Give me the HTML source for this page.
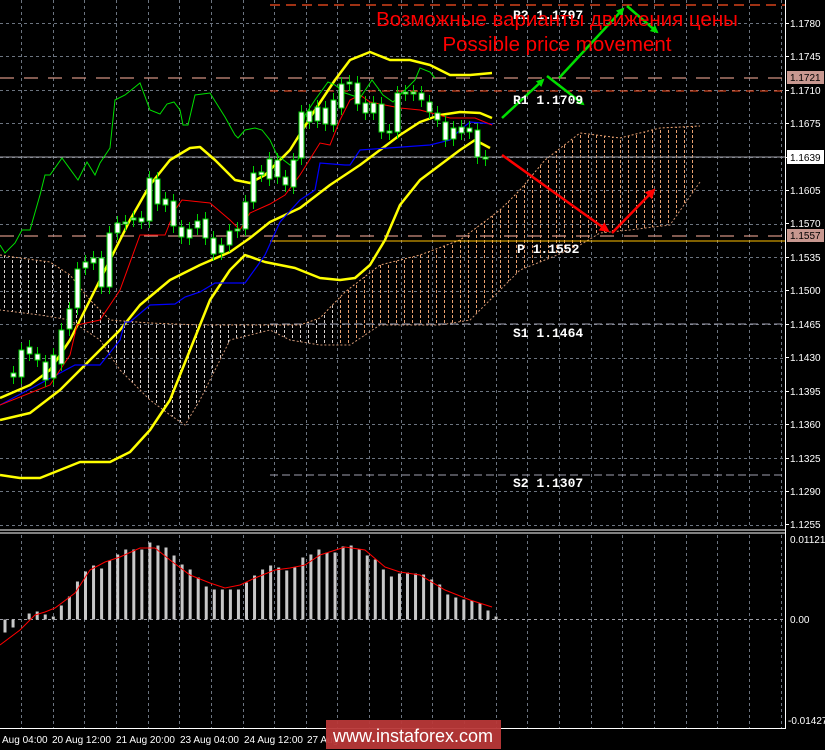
<!DOCTYPE html>
<html><head><meta charset="utf-8"><style>
html,body{margin:0;padding:0;background:#000;width:825px;height:750px;overflow:hidden}
svg{display:block}
.ax{font:10px "Liberation Sans",sans-serif;fill:#fff}
.lv{font:bold 13px "Liberation Mono",monospace;fill:#fff}
.rt{font:20.5px "Liberation Sans","Noto Sans CJK SC",sans-serif;fill:#ff0000}
.bt{font:10px "Liberation Sans",sans-serif;fill:#fff}
</style></head><body>
<svg id="s" width="825" height="750" xmlns="http://www.w3.org/2000/svg">
<defs>
<pattern id="hw" x="0" y="0" width="8" height="5" patternUnits="userSpaceOnUse"><rect x="4" y="0" width="1" height="3" fill="#d8d0cc"/></pattern>
<pattern id="ho" x="0" y="0" width="8" height="5" patternUnits="userSpaceOnUse"><rect x="4" y="0" width="1" height="3" fill="#e8a070"/></pattern>
<clipPath id="cl"><rect x="0" y="0" width="335" height="530"/></clipPath>
<clipPath id="cr"><rect x="335" y="0" width="450" height="530"/></clipPath>
<marker id="ag" markerWidth="8" markerHeight="8" refX="6" refY="4" orient="auto" markerUnits="userSpaceOnUse"><path d="M0,0 L8,4 L0,8 z" fill="#00e000"/></marker>
<marker id="ar" markerWidth="10" markerHeight="10" refX="8" refY="5" orient="auto" markerUnits="userSpaceOnUse"><path d="M0,0 L10,5 L0,10 z" fill="#ff0000"/></marker>
</defs>
<g id="grid"></g>
<g>
<polygon points="0,255 20,258 50,262 70,275 90,300 110,320 150,323 200,325 260,325 300,325 320,318 345,292 380,265 420,255 460,240 500,210 520,190 545,160 580,133 620,138 660,128 700,126 700,182 670,225 630,230 600,233 580,245 550,258 520,270 500,290 470,320 440,325 380,325 350,345 320,345 290,340 270,330 230,340 200,400 185,425 170,415 150,400 120,370 100,340 70,320 40,315 0,310" fill="url(#hw)" clip-path="url(#cl)"/>
<polygon points="0,255 20,258 50,262 70,275 90,300 110,320 150,323 200,325 260,325 300,325 320,318 345,292 380,265 420,255 460,240 500,210 520,190 545,160 580,133 620,138 660,128 700,126 700,182 670,225 630,230 600,233 580,245 550,258 520,270 500,290 470,320 440,325 380,325 350,345 320,345 290,340 270,330 230,340 200,400 185,425 170,415 150,400 120,370 100,340 70,320 40,315 0,310" fill="url(#ho)" clip-path="url(#cr)"/>
<polyline points="0,255 20,258 50,262 70,275 90,300 110,320 150,323 200,325 260,325 300,325 320,318 345,292 380,265 420,255 460,240 500,210 520,190 545,160 580,133 620,138 660,128 700,126" fill="none" stroke="#e8a070" stroke-width="1" stroke-dasharray="2,2"/>
<polyline points="700,182 670,225 630,230 600,233 580,245 550,258 520,270 500,290 470,320 440,325 380,325 350,345 320,345 290,340 270,330 230,340 200,400 185,425 170,415 150,400 120,370 100,340 70,320 40,315 0,310" fill="none" stroke="#c89070" stroke-width="1" stroke-dasharray="2,2"/>
</g>
<line x1="270" y1="5" x2="785" y2="5" stroke="#ff5020" stroke-dasharray="10,6" stroke-width="1.3"/>
<line x1="0" y1="78" x2="785" y2="78" stroke="#d09080" stroke-dasharray="14,10" stroke-width="1.2"/>
<line x1="270" y1="91" x2="785" y2="91" stroke="#ff5020" stroke-dasharray="8,6" stroke-width="1"/>
<line x1="0" y1="157" x2="785" y2="157" stroke="#a0a0a8" stroke-width="1"/>
<line x1="0" y1="236" x2="785" y2="236" stroke="#d09080" stroke-dasharray="14,10" stroke-width="1.2"/>
<line x1="270" y1="241" x2="785" y2="241" stroke="#ffc000" stroke-width="1"/>
<line x1="270" y1="324" x2="785" y2="324" stroke="#a0a0b0" stroke-dasharray="8,4" stroke-width="1"/>
<line x1="270" y1="475" x2="785" y2="475" stroke="#a0a0b0" stroke-dasharray="8,4" stroke-width="1"/>
<g fill="none" stroke="#ffff00" stroke-width="2.5" stroke-linejoin="round">
<polyline points="0,475 20,478 40,478 60,470 80,462 110,462 130,452 150,430 170,400 190,350 210,300 230,270 245,255 265,262 295,268 320,278 340,280 355,278 370,265 385,240 400,205 420,180 440,165 460,150 475,140 490,148"/>
<polyline points="0,420 30,413 60,390 80,370 100,350 120,330 140,305 170,280 200,265 230,252 250,238 270,222 300,208 330,185 360,165 380,150 400,135 420,122 440,115 460,112 480,113 492,118"/>
<polyline points="0,398 30,385 50,370 70,340 90,300 110,260 130,220 150,185 170,160 190,148 200,147 215,160 235,180 250,183 265,175 290,150 315,110 335,80 350,60 370,52 390,60 410,60 430,65 450,75 470,75 492,73"/>
</g>
<polyline fill="none" stroke="#0000ff" stroke-width="1.2" points="0,405 75,365 100,365 120,340 125,322 130,322 150,305 175,304 185,297 200,292 215,283 245,283 258,265 265,255 280,222 300,200 315,190 320,163 345,165 350,165 360,150 430,145 450,140 460,130 470,122 493,124"/>
<polyline fill="none" stroke="#ff0000" stroke-width="1" points="0,405 50,385 70,355 77,325 100,320 120,290 140,235 150,235 165,235 175,210 182,200 210,203 230,220 240,230 250,213 270,204 285,195 300,175 320,143 330,145 340,120 350,100 360,95 370,102 380,104 400,108 420,110 450,118 460,118 475,118 492,125"/>
<polyline fill="none" stroke="#00e000" stroke-width="1" points="0,245 5,253 15,243 22,230 30,230 40,195 45,175 50,175 62,158 78,180 87,162 95,175 100,163 110,148 115,100 125,95 135,87 140,83 150,110 160,114 167,104 174,102 180,110 183,125 188,125 195,95 210,93 225,117 235,135 238,138 245,130 255,128 262,130 270,140 277,155 290,165 298,160 305,115 315,100 328,82 335,85 345,93 360,98 372,80 383,95 393,102 405,90 415,80 420,68 430,72 435,78"/>
<g id="candles"></g>
<g stroke-width="2.5" fill="none">
<line x1="502" y1="118" x2="543" y2="80" stroke="#00e000" marker-end="url(#ag)"/>
<line x1="547" y1="76" x2="583" y2="104" stroke="#00e000" marker-end="url(#ag)"/>
<line x1="559" y1="78" x2="623" y2="9" stroke="#00e000" marker-end="url(#ag)"/>
<line x1="627" y1="6" x2="657" y2="32" stroke="#00e000" marker-end="url(#ag)"/>
<line x1="502" y1="155" x2="608" y2="231" stroke="#ff0000" marker-end="url(#ar)"/>
<line x1="612" y1="233" x2="654" y2="190" stroke="#ff0000" marker-end="url(#ar)"/>
</g>
<text class="lv" x="513" y="19">R2 1.1797</text>
<text class="lv" x="513" y="104">R1 1.1709</text>
<text class="lv" x="517" y="253">P 1.1552</text>
<text class="lv" x="513" y="337">S1 1.1464</text>
<text class="lv" x="513" y="487">S2 1.1307</text>
<text class="rt" x="557" y="26" text-anchor="middle">Возможные варианты движения цены</text>
<text class="rt" x="557" y="51" text-anchor="middle">Possible price movement</text>
<line x1="0" y1="530" x2="785" y2="530" stroke="#fff"/>
<line x1="0" y1="533" x2="785" y2="533" stroke="#fff"/>
<line x1="0" y1="728.5" x2="785" y2="728.5" stroke="#fff"/>
<line x1="785.5" y1="0" x2="785.5" y2="729" stroke="#fff"/>
<line x1="0" y1="619.5" x2="785" y2="619.5" stroke="#a0a0a8" stroke-dasharray="3,3"/>
<g id="macd"></g>
<polyline fill="none" stroke="#ff0000" stroke-width="1" points="0,645 20,630 35,615 45,612 55,608 75,593 90,570 105,562 120,557 140,548 155,548 170,560 190,575 210,583 225,588 240,585 255,578 275,570 290,568 305,565 320,555 345,547 365,550 385,567 400,572 420,575 445,590 470,600 492,607"/>
<g id="axis"></g>
<rect x="326" y="720" width="175" height="29" fill="#b83838" opacity="0.95"/>
<text x="413" y="742" text-anchor="middle" style="font:18px 'Liberation Sans',sans-serif;fill:#fff">www.instaforex.com</text>
</svg>
<script>
var NS="http://www.w3.org/2000/svg";
function el(p,t,a,tx){var e=document.createElementNS(NS,t);for(var k in a)e.setAttribute(k,a[k]);if(tx)e.textContent=tx;document.getElementById(p).appendChild(e);return e;}
for(var i=0;i<16;i++){var y=Math.round(23+i*33.45)+0.5;el('grid','line',{x1:0,y1:y,x2:785,y2:y,stroke:'#6c7480','stroke-dasharray':'3,3'});}
for(var x=21;x<785;x+=31.65){var xx=Math.round(x)+0.5;el('grid','line',{x1:xx,y1:0,x2:xx,y2:528,stroke:'#6c7480','stroke-dasharray':'3,3'});el('grid','line',{x1:xx,y1:535,x2:xx,y2:728,stroke:'#6c7480','stroke-dasharray':'3,3'});}
var pr=['1.1780','1.1745','1.1710','1.1675','1.1639','1.1605','1.1570','1.1535','1.1500','1.1465','1.1430','1.1395','1.1360','1.1325','1.1290','1.1255'];
var py=[23,56,90,123,157,190,223,257,290,324,357,391,424,458,491,524];
for(i=0;i<pr.length;i++){el('axis','line',{x1:785,y1:py[i]+.5,x2:789,y2:py[i]+.5,stroke:'#fff'});if(pr[i]=='1.1639')continue;el('axis','text',{x:790,y:py[i]+4,'class':'ax'},pr[i]);}
el('axis','rect',{x:787,y:71,width:37,height:13,fill:'#c89890'});el('axis','text',{x:790,y:81,'class':'ax',style:'fill:#000'},'1.1721');
el('axis','rect',{x:787,y:150,width:37,height:14,fill:'#fff'});el('axis','text',{x:790,y:161,'class':'ax',style:'fill:#000'},'1.1639');
el('axis','rect',{x:787,y:229,width:37,height:13,fill:'#c89890'});el('axis','text',{x:790,y:239,'class':'ax',style:'fill:#000'},'1.1557');
el('axis','text',{x:790,y:543,'class':'ax'},'0.01121');el('axis','text',{x:790,y:623,'class':'ax'},'0.00');el('axis','text',{x:788,y:724,'class':'ax'},'-0.01427');
var bl=[['Aug 04:00',2],['20 Aug 12:00',52],['21 Aug 20:00',116],['23 Aug 04:00',180],['24 Aug 12:00',244],['27 Aug',307]];
bl.forEach(function(b){el('axis','text',{x:b[1],y:743,'class':'bt'},b[0]);});
var c=[[373,377],[350,377],[347,354],[354,360],[362,380],[355,378],[330,364],[309,329],[269,308],[262,268],[258,263],[258,287],[233,287],[223,233],[222,224],[218,220],[218,222],[178,221],[179,204],[199,205],[201,226],[227,237],[229,238],[221,228],[219,238],[238,254],[245,253],[231,245],[229,231],[202,229],[173,202],[172,175],[159,179],[160,177],[177,185],[160,187],[112,158],[111,122],[107,121],[108,124],[100,125],[84,108],[82,84],[83,104],[103,113],[103,113],[104,132],[131,133],[93,132],[92,94],[92,94],[93,100],[102,112],[113,120],[122,140],[128,139],[127,133],[128,132],[130,157],[157,159]];
c.forEach(function(d,i){var x=13+i*8;el('candles','line',{x1:x+.5,y1:d[0]-7,x2:x+.5,y2:d[1]+7,stroke:'#00d000'});el('candles','rect',{x:x-2,y:d[0],width:5,height:Math.max(1,d[1]-d[0]),fill:'#fff',stroke:'#00d000','stroke-width':1});});
var h=[-13,-8,0,6,8,5,3,14,23,38,48,54,51,59,65,70,70,70,77,74,72,64,55,50,42,33,30,30,30,30,37,44,50,54,52,49,52,62,65,70,67,67,73,74,70,64,60,50,43,46,47,46,45,40,35,25,22,20,19,16,9,3];
h.forEach(function(v,i){if(!v)return;var x=5+i*8.05;el('macd','rect',{x:x-1.5,y:v>0?619.5-v:619.5,width:3,height:Math.abs(v),fill:'#c8c8c8'});});
</script>
</body></html>
